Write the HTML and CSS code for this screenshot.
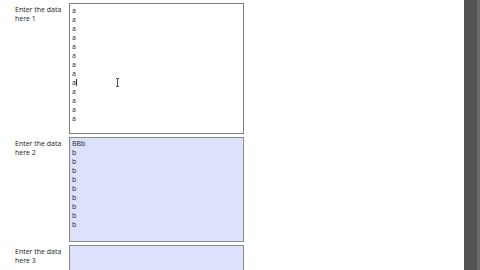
FILE: index.html
```
<!DOCTYPE html>
<html>
<head>
<meta charset="utf-8">
<link rel="stylesheet" href="styles.css">
</head>
<body>
<div class="page">
  <div class="form">
    <div class="row">
      <div class="label">Enter the data<br>here 1</div>
      <div class="field field-tall">
        <div>a</div><div>a</div><div>a</div><div>a</div><div>a</div><div>a</div><div>a</div><div>a</div>
        <div>a<span class="caret"></span></div>
        <div>a</div><div>a</div><div>a</div><div>a</div>
        <span class="ibeam"></span>
      </div>
    </div>
    <div class="row">
      <div class="label">Enter the data<br>here 2</div>
      <div class="field field-active field-mid">
        <div>BBb</div><div>b</div><div>b</div><div>b</div><div>b</div><div>b</div><div>b</div><div>b</div><div>b</div><div>b</div>
      </div>
    </div>
    <div class="row row-last">
      <div class="label">Enter the data<br>here 3</div>
      <div class="field field-active field-short"></div>
    </div>
  </div>
  <div class="sidebar"><div class="sidebar-edge"></div></div>
</div>
</body>
</html>
```
FILE: styles.css
```
html, body {
  margin: 0;
  padding: 0;
  background: #ffffff;
  height: 270px;
  overflow: hidden;
}
.page {
  display: flex;
  height: 270px;
  overflow: hidden;
  font-family: "Open Sans", "Liberation Sans", sans-serif;
  font-size: 7px;
  line-height: 9px;
  color: #222;
}
.form {
  flex: 1;
  display: flex;
  flex-direction: column;
  gap: 3px;
  padding-top: 3px;
}
.row {
  display: flex;
}
.row-last {
  flex: 1;
}
.label {
  width: 54px;
  padding-left: 15px;
  padding-top: 2px;
  color: #222;
}
.field {
  position: relative;
  box-sizing: border-box;
  width: 175px;
  border: 1px solid #7d7d7d;
  background: #ffffff;
  padding: 1.5px 2px;
  color: #1e1e1e;
}
.field-tall { height: 131px; }
.field-mid { height: 105px; padding-top: 1px; }
.field-short { border-bottom: none; }
.field-active {
  background: #dde1fb;
  border-color: #8a8a8a;
}
.caret {
  display: inline-block;
  width: 1px;
  height: 7px;
  background: #333;
  vertical-align: -1px;
}
.ibeam {
  position: absolute;
  left: 46px;
  top: 74px;
  width: 3px;
  height: 9px;
  border-top: 1px solid #555;
  border-bottom: 1px solid #555;
  box-sizing: border-box;
  background: linear-gradient(#555, #555) center / 1px 100% no-repeat;
}
.sidebar {
  width: 16px;
  background: repeating-linear-gradient(90deg, #555 0px, #4c4c4c 1px, #5a5a5a 2px, #515151 3px);
  position: relative;
}
.sidebar-edge {
  position: absolute;
  right: 0;
  top: 0;
  bottom: 0;
  width: 3px;
  background: #6a6a6a;
}
```
